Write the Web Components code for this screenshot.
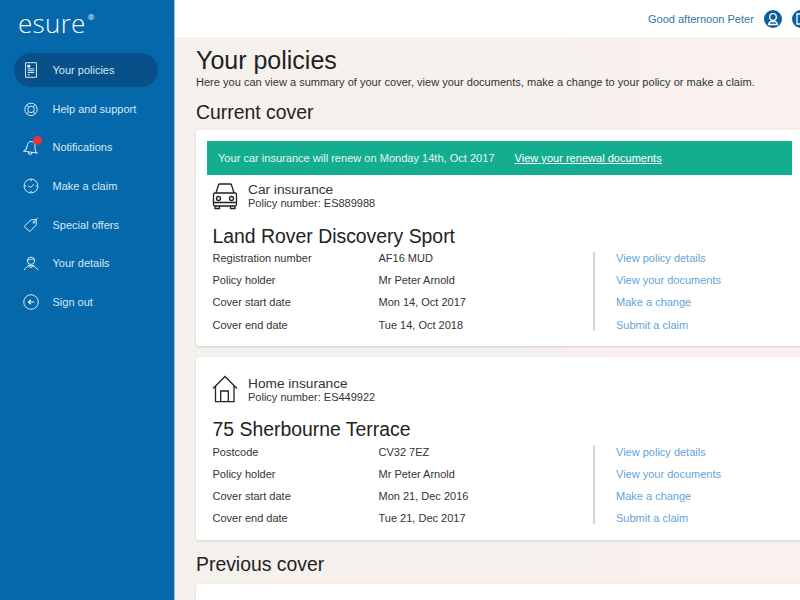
<!DOCTYPE html>
<html lang="en">
<head>
<meta charset="utf-8">
<title>Your policies</title>
<style>
  html, body { margin: 0; height: 600px; overflow: hidden; }
  body { font-family: "Liberation Sans", Arial, sans-serif; display: flex; color: #222; }
</style>
</head>
<body>
<app-sidebar>
  <nav-item icon="doc" active>Your policies</nav-item>
  <nav-item icon="help">Help and support</nav-item>
  <nav-item icon="bell" badge>Notifications</nav-item>
  <nav-item icon="clock">Make a claim</nav-item>
  <nav-item icon="tag">Special offers</nav-item>
  <nav-item icon="person">Your details</nav-item>
  <nav-item icon="back">Sign out</nav-item>
</app-sidebar>
<app-main>
  <h-section kind="page">Your policies</h-section>
  <p-intro>Here you can view a summary of your cover, view your documents, make a change to your policy or make a claim.</p-intro>
  <h-section kind="sub">Current cover</h-section>
  <policy-card icon="car" type="Car insurance" number="ES889988" name="Land Rover Discovery Sport"
    renewal="Your car insurance will renew on Monday 14th, Oct 2017"
    rows='[["Registration number","AF16 MUD"],["Policy holder","Mr Peter Arnold"],["Cover start date","Mon 14, Oct 2017"],["Cover end date","Tue 14, Oct 2018"]]'></policy-card>
  <policy-card icon="home" type="Home insurance" number="ES449922" name="75 Sherbourne Terrace"
    rows='[["Postcode","CV32 7EZ"],["Policy holder","Mr Peter Arnold"],["Cover start date","Mon 21, Dec 2016"],["Cover end date","Tue 21, Dec 2017"]]'></policy-card>
  <h-section kind="prev">Previous cover</h-section>
  <empty-card></empty-card>
</app-main>

<script>
  const navIcons = {
    doc: '<path d="M3.500 1h15v20h-15z"/><path d="M6.500 4.500h3v2.500h-3z" fill="#e4f0f8"/><path d="M6.500 9.500h9M6.500 12h9M6.500 14.500h9M6.500 17.500h3"/>',
    help: '<circle cx="11" cy="11.500" r="8.500"/><circle cx="11" cy="11.500" r="4.500"/><path d="M5 5.500l2.800 2.800M17 5.500l-2.800 2.800M5 17.500l2.800-2.800M17 17.500l-2.800-2.800"/>',
    bell: '<g transform="rotate(8 11 11)"><path d="M2 18c2.500-1.500 3.500-4 3.500-7.500C5.500 6 8 3.500 11 3.500s5.500 2.500 5.500 7c0 3.500 1 6 3.500 7.500z"/><path d="M8.500 18.500c0 3.500 5 3.500 5 0"/></g>',
    clock: '<circle cx="11" cy="11" r="9.500"/><path d="M7 10.500l3.500 2.500 4.500-4.500M11 2.500v2M11 17.500v2M2.500 11h2M17.500 11h2"/>',
    tag: '<path d="M1.500 13L11 4l7-.5.500 7L9.500 20z"/><circle cx="15" cy="7.500" r="1.200"/><path d="M16 6.500l4-5.500"/>',
    person: '<circle cx="11" cy="8" r="5"/><path d="M6 7c2.500.5 6.500-3 10 0M6.500 14c1 1 8 1 9 0M1.500 21c1.500-4 5-4.500 6.500-6l3 2.500 3-2.500c1.500 1.500 5 2 6.500 6"/>',
    back: '<circle cx="11" cy="11" r="10"/><path d="M15.500 11H8M11 8l-3.500 3 3.500 3" stroke-width="1.700"/>'
  };

  const sidebarTemplate = document.createElement("template");
  sidebarTemplate.innerHTML = `
    <style>
      :host {
        position: relative;
        z-index: 1;
        display: flex;
        flex-direction: column;
        flex: 0 0 174px;
        width: 174px;
        height: 600px;
        background: #0568ab;
        box-shadow: 1px 0 0 #8fc3e2;
        box-sizing: border-box;
        padding: 0 16px 0 14px;
      }
      .logo {
        height: 53px;
        padding: 6px 0 0 4px;
        box-sizing: border-box;
        color: #fff;
        font: 300 26px/34px "Open Sans", "Liberation Sans", sans-serif;
        letter-spacing: 0.3px;
      }
      sup { font-size: 8px; position: relative; top: -13px; left: 2px; line-height: 0; vertical-align: baseline; letter-spacing: 0; font-weight: 400; }
      .items { display: flex; flex-direction: column; gap: 5px; }
    </style>
    <div class="logo">esure<sup>®</sup></div>
    <div class="items"><slot></slot></div>
  `;
  class AppSidebar extends HTMLElement {
    constructor() {
      super();
      this.attachShadow({ mode: "open" }).appendChild(sidebarTemplate.content.cloneNode(true));
    }
  }
  customElements.define("app-sidebar", AppSidebar);

  class NavItem extends HTMLElement {
    constructor() {
      super();
      const icon = navIcons[this.getAttribute("icon")] || "";
      const badge = this.hasAttribute("badge") ? '<span class="badge"></span>' : "";
      this.attachShadow({ mode: "open" }).innerHTML = `
        <style>
          :host {
            display: flex;
            align-items: center;
            height: 33.700px;
            border-radius: 17px;
            font-size: 11px;
            color: #d6e8f5;
          }
          :host([active]) { background: #07508a; }
          .icon { position: relative; width: 16px; height: 16px; margin: 0 14px 0 8.500px; }
          svg { display: block; fill: none; stroke: #e4f0f8; stroke-width: 1.300; }
          .badge {
            position: absolute; top: -3px; left: 10.500px;
            width: 9px; height: 9px; border-radius: 50%; background: #e8343f;
          }
        </style>
        <span class="icon"><svg width="16" height="16" viewBox="0 0 22 22">${icon}</svg>${badge}</span>
        <slot></slot>
      `;
    }
  }
  customElements.define("nav-item", NavItem);

  const mainTemplate = document.createElement("template");
  mainTemplate.innerHTML = `
    <style>
      :host {
        display: flex;
        flex-direction: column;
        flex: 1;
        min-width: 0;
        height: 600px;
        overflow: hidden;
        background: linear-gradient(to right, #f5f1ed, #f9f1ed);
      }
      header {
        flex: 0 0 37px;
        background: #fff;
        display: flex;
        align-items: center;
        gap: 10px;
        box-sizing: border-box;
        padding-left: 474px;
        color: #2f75a8;
        font-size: 11px;
        white-space: nowrap;
      }
      .avatar { flex: none; width: 18px; height: 18px; border-radius: 50%; background: #0a5f9f; display: block; }
      .content {
        display: flex;
        flex-direction: column;
        padding-left: 22px;
        width: 607px;
      }
    </style>
    <header>
      <span>Good afternoon Peter</span>
      <svg class="avatar" viewBox="0 0 18 18" fill="none" stroke="#fff" stroke-width="1.300"><circle cx="9" cy="7" r="3.300"/><path d="M4.500 14.500c.5-2.500 2.500-3 3-3.500l1.500 1 1.500-1c.5.5 2.500 1 3 3.500z"/></svg>
      <svg class="avatar" viewBox="0 0 18 18" fill="none" stroke="#fff" stroke-width="1.300"><path d="M5 4h8v10H5z"/></svg>
    </header>
    <div class="content"><slot></slot></div>
  `;
  class AppMain extends HTMLElement {
    constructor() {
      super();
      this.attachShadow({ mode: "open" }).appendChild(mainTemplate.content.cloneNode(true));
    }
  }
  customElements.define("app-main", AppMain);

  class HSection extends HTMLElement {
    constructor() {
      super();
      this.attachShadow({ mode: "open" }).innerHTML = `
        <style>
          :host { display: block; color: #222; white-space: nowrap; }
          :host([kind="page"]) { font-size: 25px; line-height: 30px; margin-top: 8px; }
          :host([kind="sub"]) { font-size: 19.400px; line-height: 24px; margin-top: 11px; }
          :host([kind="prev"]) { font-size: 19.400px; line-height: 24px; margin-top: 12px; }
        </style>
        <slot></slot>
      `;
    }
  }
  customElements.define("h-section", HSection);

  class PIntro extends HTMLElement {
    constructor() {
      super();
      this.attachShadow({ mode: "open" }).innerHTML = `
        <style>:host { display: block; font-size: 11.050px; line-height: 14px; color: #333; white-space: nowrap; }</style>
        <slot></slot>
      `;
    }
  }
  customElements.define("p-intro", PIntro);

  const typeIcons = {
    car: '<path d="M4 13l2.500-8c.2-.6.6-1 1.200-1h10.600c.6 0 1 .4 1.200 1L22 13"/><rect x="1.500" y="13" width="23" height="13" rx="1.500"/><circle cx="6.500" cy="18.500" r="2"/><circle cx="19.500" cy="18.500" r="2"/><path d="M1.500 22.500h23M3 26v2.500h4.500V26M18.500 26v2.500H23V26"/>',
    home: '<path d="M1 14.500L13 2.500l12 12"/><path d="M3.500 12v15.700h18.500V12"/><path d="M8.700 27.700V17h7.600v10.700"/>'
  };
  const links = ["View policy details", "View your documents", "Make a change", "Submit a claim"];

  class PolicyCard extends HTMLElement {
    constructor() {
      super();
      const rows = JSON.parse(this.getAttribute("rows"));
      const renewal = this.getAttribute("renewal");
      this.attachShadow({ mode: "open" }).innerHTML = `
        <style>
          :host {
            display: block;
            background: #fff;
            border-radius: 3px;
            box-shadow: 0 1px 3px rgba(0,0,0,.14);
            margin-top: ${renewal ? "6px" : "11px"};
            padding: ${renewal ? "11px" : "16.500px"} 11px ${renewal ? "10px" : "10.500px"};
            height: ${renewal ? "195px" : "156px"};
            box-sizing: content-box;
          }
          .banner {
            display: flex;
            align-items: center;
            height: 34px;
            background: #14ad8f;
            color: #e6f6f2;
            font-size: 11.050px;
            padding-left: 11px;
            gap: 20px;
            white-space: nowrap;
          }
          .banner a { color: #fff; text-decoration: underline; }
          .head { display: flex; align-items: center; gap: 10px; margin: ${renewal ? "5px" : "0"} 0 0 5px; }
          .head svg { flex: none; display: block; fill: none; stroke: #222; stroke-width: 1.300; }
          .text { padding-top: 2px; }
          .type { font-size: 13.700px; line-height: 15px; color: #333; }
          .num { font-size: 11px; line-height: 13px; color: #333; }
          .name { font-size: 19.400px; line-height: 22px; color: #222; margin: ${renewal ? "15px" : "14px"} 0 0 5.500px; }
          .body { display: flex; margin: ${renewal ? "0" : "1px"} 0 0 5.500px; }
          .rows { width: 380.500px; display: grid; grid-template-columns: 166px 1fr; grid-auto-rows: 22.200px; align-items: center; font-size: 11px; color: #333; }
          .links {
            background: linear-gradient(#d5d5d5, #d5d5d5) 0 center / 2px 79px no-repeat;
            padding-left: 23px;
            display: grid;
            grid-auto-rows: 22.200px;
            align-items: center;
            font-size: 11px;
            color: #63a4da;
          }
        </style>
        ${renewal ? `<div class="banner"><span>${renewal}</span><a href="#">View your renewal documents</a></div>` : ""}
        <div class="head">
          <svg width="26" height="30" viewBox="0 0 26 30">${typeIcons[this.getAttribute("icon")]}</svg>
          <div class="text">
            <div class="type">${this.getAttribute("type")}</div>
            <div class="num">Policy number: ${this.getAttribute("number")}</div>
          </div>
        </div>
        <div class="name">${this.getAttribute("name")}</div>
        <div class="body">
          <div class="rows">${rows.map(r => `<span>${r[0]}</span><span>${r[1]}</span>`).join("")}</div>
          <div class="links">${links.map(l => `<span>${l}</span>`).join("")}</div>
        </div>
      `;
    }
  }
  customElements.define("policy-card", PolicyCard);

  class EmptyCard extends HTMLElement {
    constructor() {
      super();
      this.attachShadow({ mode: "open" }).innerHTML = `
        <style>:host { display: block; height: 60px; margin-top: 8px; background: #fff; border-radius: 3px; box-shadow: 0 1px 3px rgba(0,0,0,.14); }</style>
      `;
    }
  }
  customElements.define("empty-card", EmptyCard);
</script>
</body>
</html>
